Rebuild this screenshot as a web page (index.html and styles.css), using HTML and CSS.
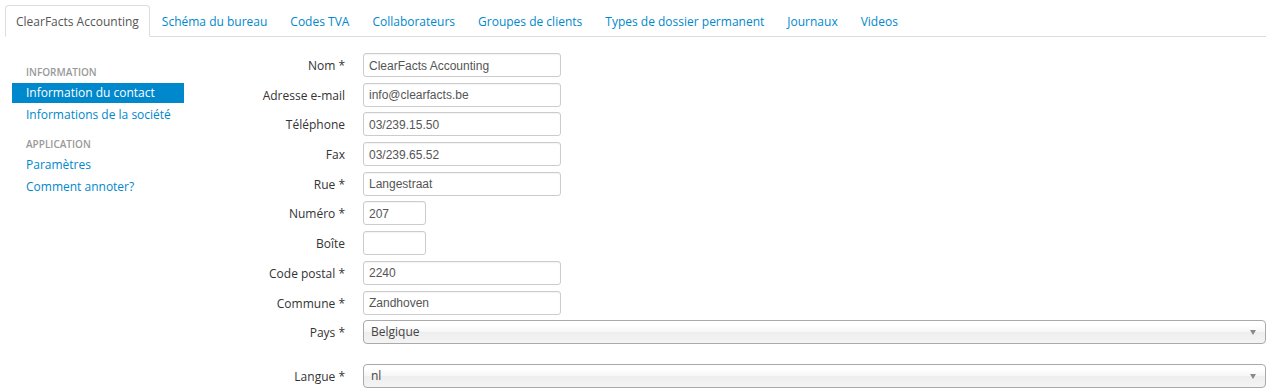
FILE: index.html
```html
<!DOCTYPE html>
<html lang="fr">
<head>
<meta charset="utf-8">
<title>ClearFacts Accounting</title>
<link rel="stylesheet" href="styles.css">
</head>
<body>
<div class="page">
  <ul class="tabs">
    <li class="tab active"><a>ClearFacts Accounting</a></li>
    <li class="tab"><a>Schéma du bureau</a></li>
    <li class="tab"><a>Codes TVA</a></li>
    <li class="tab"><a>Collaborateurs</a></li>
    <li class="tab"><a>Groupes de clients</a></li>
    <li class="tab"><a>Types de dossier permanent</a></li>
    <li class="tab"><a>Journaux</a></li>
    <li class="tab"><a>Videos</a></li>
  </ul>
  <div class="content">
    <ul class="sidenav">
      <li class="nav-header">INFORMATION</li>
      <li class="nav-item active"><a>Information du contact</a></li>
      <li class="nav-item"><a>Informations de la société</a></li>
      <li class="nav-header">APPLICATION</li>
      <li class="nav-item"><a>Paramètres</a></li>
      <li class="nav-item"><a>Comment annoter?</a></li>
    </ul>
    <form class="form">
      <label class="lbl">Nom *</label><div class="field"><input class="inp" type="text" value="ClearFacts Accounting"></div>
      <label class="lbl">Adresse e-mail</label><div class="field"><input class="inp" type="text" value="info@clearfacts.be"></div>
      <label class="lbl">Téléphone</label><div class="field"><input class="inp" type="text" value="03/239.15.50"></div>
      <label class="lbl">Fax</label><div class="field"><input class="inp" type="text" value="03/239.65.52"></div>
      <label class="lbl">Rue *</label><div class="field"><input class="inp" type="text" value="Langestraat"></div>
      <label class="lbl">Numéro *</label><div class="field"><input class="inp small" type="text" value="207"></div>
      <label class="lbl">Boîte</label><div class="field"><input class="inp small" type="text" value=""></div>
      <label class="lbl">Code postal *</label><div class="field"><input class="inp" type="text" value="2240"></div>
      <label class="lbl">Commune *</label><div class="field"><input class="inp" type="text" value="Zandhoven"></div>
      <label class="lbl">Pays *</label><div class="field"><div class="sel"><span>Belgique</span><i class="arrow"></i></div></div>
      <label class="lbl gap">Langue *</label><div class="field gap"><div class="sel"><span>nl</span><i class="arrow"></i></div></div>
    </form>
  </div>
</div>
</body>
</html>
```

FILE: styles.css
```css
* { box-sizing: border-box; }
html, body { margin: 0; padding: 0; background: #fff; }
body {
  font-family: "Open Sans", "DejaVu Sans", sans-serif;
  font-size: 12px;
  color: #333;
}
.page { padding: 5px 5px 0 5px; }
.tabs {
  list-style: none;
  margin: 0;
  padding: 0;
  display: flex;
  border-bottom: 1px solid #ddd;
  height: 32px;
}
.tab { margin-right: 1px; margin-bottom: -1px; }
.tab a {
  display: block;
  height: 32px;
  padding: 0 10px;
  line-height: 32px;
  color: #0088cc;
  border: 1px solid transparent;
  border-radius: 4px 4px 0 0;
  white-space: nowrap;
}
.tab.active a {
  color: #555;
  background: #fff;
  border-color: #ddd #ddd transparent #ddd;
}
.content {
  display: flex;
  padding-top: 16px;
}
.sidenav {
  list-style: none;
  margin: 0;
  padding: 9px 0 0 7px;
  width: 220px;
  flex: none;
}
.nav-header {
  font-size: 10px;
  font-weight: 600;
  color: #999;
  height: 21px;
  line-height: 21px;
  padding: 0 14px;
}
.nav-item { margin-bottom: 2px; }
.nav-item a {
  display: block;
  width: 172px;
  height: 20px;
  line-height: 20px;
  padding: 0 14px;
  color: #0088cc;
  white-space: nowrap;
}
.nav-item.active a { background: #0088cc; color: #fff; }
.nav-item + .nav-header { margin-top: 9px; }
.form {
  flex: 1;
  display: grid;
  grid-template-columns: 120px 1fr;
  column-gap: 18px;
  row-gap: 5.7px;
  margin: 0;
  padding-left: 0;
}
.lbl {
  text-align: right;
  line-height: 24px;
  height: 24px;
  padding-top: 1px;
  color: #333;
  white-space: nowrap;
}
.field { height: 24px; }
.gap { margin-top: 14px; }
.inp {
  display: block;
  width: 198px;
  height: 24px;
  border: 1px solid #ccc;
  border-radius: 3px;
  padding: 1px 5px 0 5px;
  font-family: "Liberation Sans", Arial, sans-serif;
  font-size: 12px;
  color: #555;
  background: #fff;
  outline: none;
  box-shadow: inset 0 1px 1px rgba(0,0,0,0.05);
}
.inp.small { width: 63px; }
.sel {
  position: relative;
  height: 24px;
  line-height: 22px;
  border: 1px solid #aaa;
  border-radius: 4px;
  padding: 0 7px;
  background: linear-gradient(#fff 20%, #f6f6f6 50%, #eee 52%, #f4f4f4 100%);
  color: #444;
}
.arrow {
  position: absolute;
  right: 9px;
  top: 9px;
  width: 0;
  height: 0;
  border-left: 3.5px solid transparent;
  border-right: 3.5px solid transparent;
  border-top: 5px solid #888;
}
```
